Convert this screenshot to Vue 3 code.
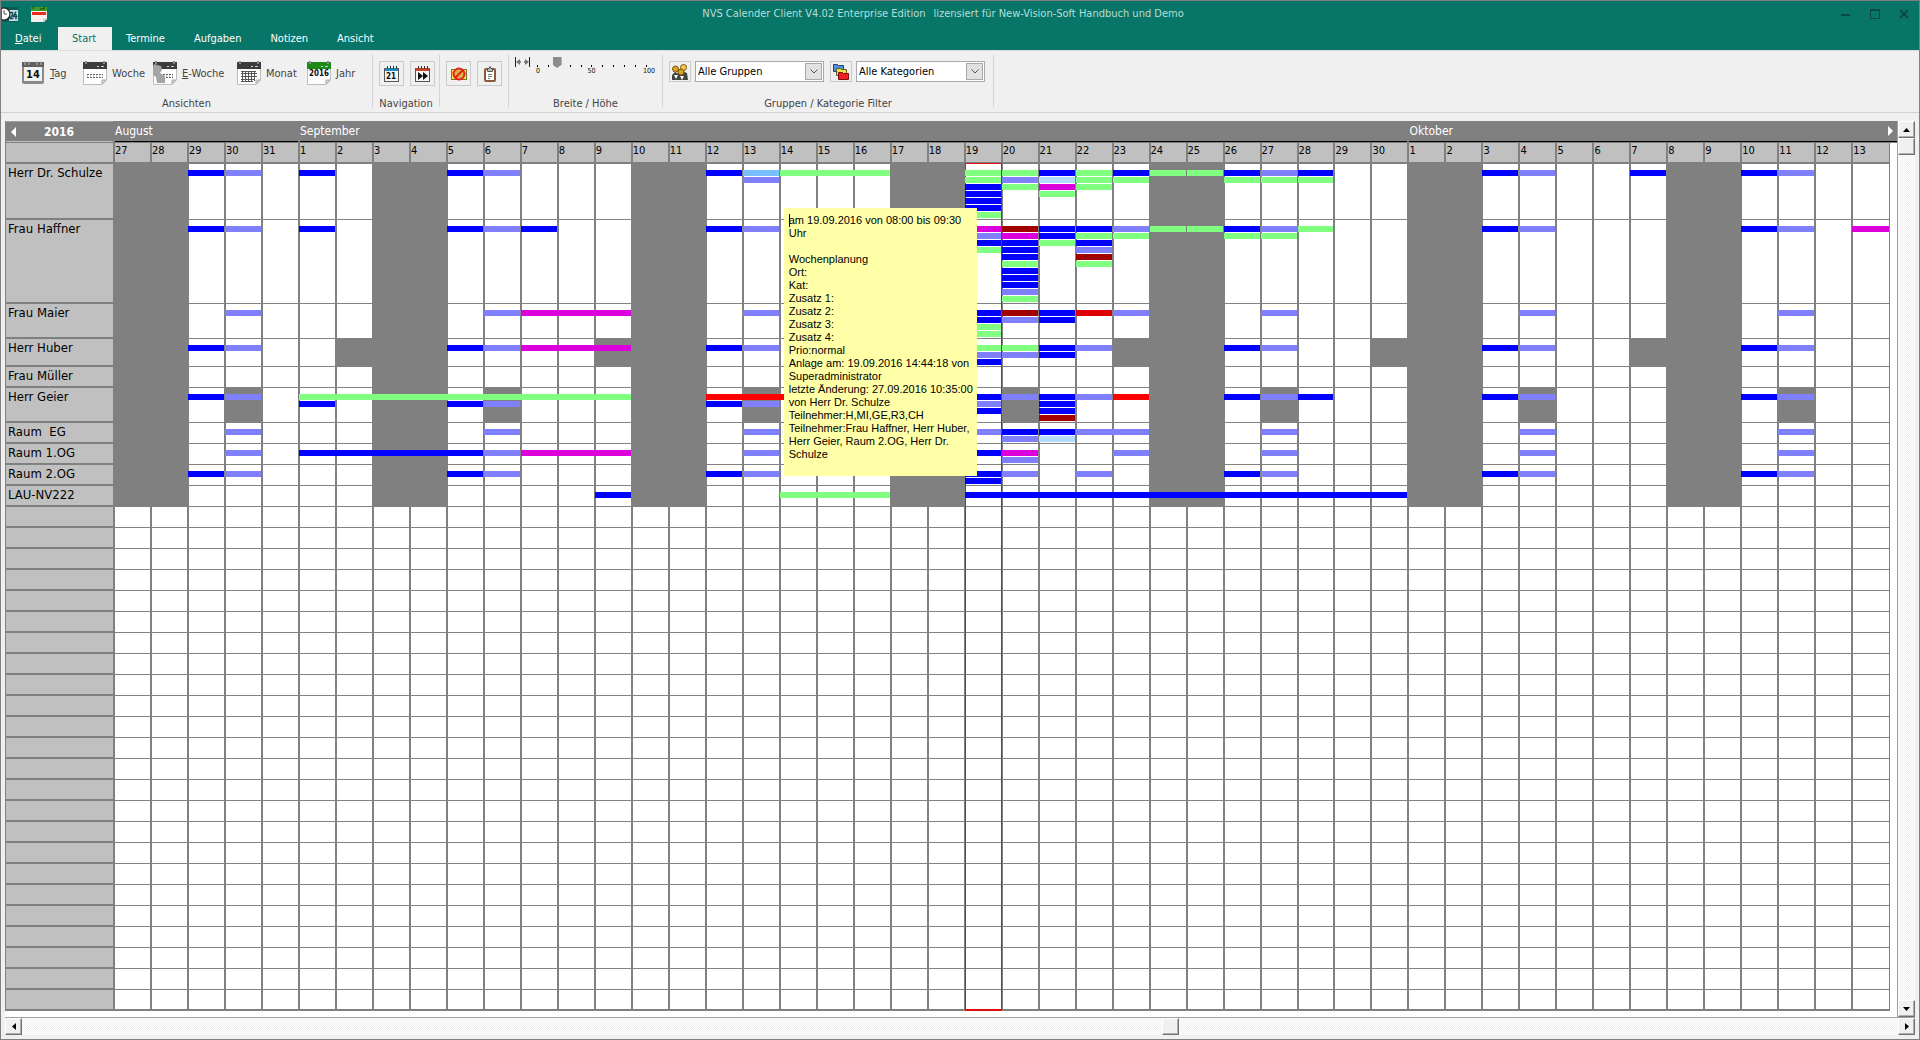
<script setup>
const tabs = ['Datei', 'Start', 'Termine', 'Aufgaben', 'Notizen', 'Ansicht']

const views = [
  { kind: 'day', key: 'T', rest: 'ag', width: 62 },
  { kind: 'week', key: '', rest: 'Woche', width: 70 },
  { kind: 'workweek', key: 'E', rest: '-Woche', width: 84 },
  { kind: 'month', key: '', rest: 'Monat', width: 70 },
  { kind: 'year', key: '', rest: 'Jahr', width: 60 },
]

const range = (prefix, from, to) =>
  Array.from({ length: to - from + 1 }, (_, i) => ({ id: prefix + (from + i), day: from + i }))

const days = [...range('a', 27, 31), ...range('s', 1, 30), ...range('o', 1, 13)]
const months = [
  { name: 'August', span: 5 },
  { name: 'September', span: 30 },
  { name: 'Oktober', span: 14 },
]
const weekend = ['a27', 'a28', 's3', 's4', 's10', 's11', 's17', 's18', 's24', 's25', 'o1', 'o2', 'o8', 'o9']
const fridays = ['s2', 's9', 's16', 's23', 's30', 'o7']
const tuesdays = ['a30', 's6', 's13', 's20', 's27', 'o4', 'o11']

// Each entry is "<colour><days>"; "-" leaves a lane free.
const people = [
  {
    name: 'Herr Dr. Schulze', lanes: 8, off: [],
    bars: {
      a29: 'b', a30: 'v', s1: 'b', s5: 'b', s6: 'v', s12: 'b', s13: 'c v', s14: 'g3',
      s19: 'g g b b b b g', s20: 'g v g', s21: 'b l m g', s22: 'g g g', s23: 'b g', s24: 'g', s25: 'g',
      s26: 'b g', s27: 'v g', s28: 'b g', o3: 'b', o4: 'v', o7: 'b', o10: 'b', o11: 'v',
    },
  },
  {
    name: 'Frau Haffner', lanes: 12, off: [],
    bars: {
      a29: 'b', a30: 'v', s1: 'b', s5: 'b', s6: 'v', s7: 'b', s12: 'b', s13: 'v', s19: 'm v b g',
      s20: 'd m b b b g b b b v g', s21: 'b b g', s22: 'b g b v d g', s23: 'v g', s24: 'g', s25: 'g',
      s26: 'b g', s27: 'v g', s28: 'g', o3: 'b', o4: 'v', o10: 'b', o11: 'v', o13: 'm',
    },
  },
  {
    name: 'Frau Maier', lanes: 5, off: [],
    bars: {
      a30: 'v', s6: 'v', s7: 'm3', s13: 'v', s19: 'b b g g', s20: 'd v', s21: 'b b', s22: 'e',
      s23: 'v', s27: 'v', o4: 'v', o11: 'v',
    },
  },
  {
    name: 'Herr Huber', lanes: 4, off: fridays,
    bars: {
      a29: 'b', a30: 'v', s5: 'b', s6: 'v', s7: 'm3', s12: 'b', s13: 'v', s19: 'g v b', s20: 'g v',
      s21: 'b b', s22: 'v', s26: 'b', s27: 'v', o3: 'b', o4: 'v', o10: 'b', o11: 'v',
    },
  },
  { name: 'Frau Müller', lanes: 3, off: [], bars: {} },
  {
    name: 'Herr Geier', lanes: 5, off: tuesdays,
    bars: {
      a29: 'b', a30: 'v', s1: 'g9 b', s5: '- b', s6: '- v', s12: 'r3 b', s13: '- v', s19: 'b v b',
      s20: 'v', s21: 'b b b d', s22: 'v', s23: 'r', s26: 'b', s27: 'v', s28: 'b', o3: 'b', o4: 'v',
      o10: 'b', o11: 'v',
    },
  },
  {
    name: 'Raum  EG', lanes: 3, off: [],
    bars: {
      a30: 'v', s6: 'v', s13: 'v', s19: 'v', s20: 'b v', s21: 'b l', s22: 'v2', s27: 'v', o4: 'v', o11: 'v',
    },
  },
  {
    name: 'Raum 1.OG', lanes: 3, off: [],
    bars: {
      a30: 'v', s1: 'b5', s6: 'v', s7: 'm3', s13: 'v', s19: 'b', s20: 'm v', s23: 'v', s27: 'v',
      o4: 'v', o11: 'v',
    },
  },
  {
    name: 'Raum 2.OG', lanes: 3, off: [],
    bars: {
      a29: 'b', a30: 'v', s5: 'b', s6: 'v', s12: 'b', s13: 'v', s19: 'b b', s20: 'v', s22: 'v',
      s26: 'b', s27: 'v', o3: 'b', o4: 'v', o10: 'b', o11: 'v',
    },
  },
  { name: 'LAU-NV222', lanes: 3, off: [], bars: { s9: 'b', s14: 'g3', s19: 'b12' } },
]

const colours = {
  b: '#0000ff', v: '#8080ff', g: '#80ff80', m: '#dc00dc', d: '#a00000', e: '#dc0000',
  r: '#ff0000', c: '#78bfff', l: '#b4dcff', '-': 'transparent',
}

const barsOf = (text) =>
  (text ? text.split(' ') : []).map((t) => ({ colour: colours[t[0]], span: Number(t.slice(1)) || 1 }))

const rows = [
  ...people.map((p) => ({
    ...p,
    cells: days.map((d) => ({
      id: d.id,
      grey: weekend.includes(d.id) || p.off.includes(d.id),
      bars: barsOf(p.bars[d.id]),
    })),
  })),
  ...Array.from({ length: 24 }, () => ({
    name: '', lanes: 3, cells: days.map((d) => ({ id: d.id, grey: false, bars: [] })),
  })),
]

const note = [
  'am 19.09.2016 von 08:00 bis 09:30', 'Uhr', '', 'Wochenplanung', 'Ort:', 'Kat:', 'Zusatz 1:', 'Zusatz 2:',
  'Zusatz 3:', 'Zusatz 4:', 'Prio:normal', 'Anlage am: 19.09.2016 14:44:18 von', 'Superadministrator',
  'letzte Änderung: 27.09.2016 10:35:00', 'von Herr Dr. Schulze', 'Teilnehmer:H,MI,GE,R3,CH',
  'Teilnehmer:Frau Haffner, Herr Huber,', 'Herr Geier, Raum 2.OG, Herr Dr.', 'Schulze',
]
</script>

<template>
  <div class="window">
    <header class="titlebar">
      <div class="caption">
        <div class="quick">
          <svg width="16" height="16" viewBox="0 0 16 16" aria-hidden="true">
            <rect width="16" height="15" y="1" fill="#0a5c58" />
            <rect x="7" y="4" width="9" height="11" fill="#cfe0e6" />
            <path d="M8 6.500h2.500v2.500L8 12.500h3.500M14 5.500L11.500 10.500h4M14 8v5.500" stroke="#14505c" stroke-width="1.500" fill="none" />
            <circle cx="2" cy="8" r="6" fill="#fff" stroke="#222" stroke-width="1.200" />
            <path d="M2 4v4h3" stroke="#555" fill="none" />
          </svg>
          <svg width="16" height="16" viewBox="0 0 16 16" aria-hidden="true">
            <path d="M0 3h16v10l-3 3H0z" fill="#f7f1ee" />
            <rect y="1" width="16" height="4" fill="#3c9a28" />
            <path d="M2 0v3M13 0v3M9 3h4" stroke="#164a10" />
            <rect x="1" y="6" width="14" height="3" fill="#ee2a20" />
            <path d="M16 12l-4 4v-3z" fill="#c9c9c9" />
          </svg>
        </div>
        <h1>NVS Calender Client V4.02 Enterprise Edition<span>lizensiert für New-Vision-Soft Handbuch und Demo</span></h1>
        <div class="winbuttons">
          <button type="button" aria-label="Minimieren"><svg width="10" height="10"><path d="M0 6h9" stroke="#0b4a43" stroke-width="2" /></svg></button>
          <button type="button" aria-label="Maximieren"><svg width="10" height="10"><path d="M.5 1v8.500h9V1" stroke="#0b4a43" fill="none" /><path d="M0 1h10" stroke="#0b4a43" stroke-width="2" /></svg></button>
          <button type="button" aria-label="Schließen"><svg width="10" height="10"><path d="M1 1l8 8M9 1l-8 8" stroke="#0b4a43" stroke-width="2" /></svg></button>
        </div>
      </div>
      <nav class="tabs">
        <a v-for="tab in tabs" :key="tab" href="#" :class="{ active: tab === 'Start' }"><template v-if="tab === 'Datei'"><u>D</u>atei</template><template v-else>{{ tab }}</template></a>
      </nav>
    </header>

    <section class="ribbon">
      <div class="group views">
        <div class="tools">
          <button v-for="v in views" :key="v.kind" type="button" class="view" :style="{ width: v.width + 'px' }">
            <svg width="24" height="24" viewBox="0 0 24 24" aria-hidden="true">
              <template v-if="v.kind === 'day'">
                <rect x="1" y="2" width="22" height="21" rx="2" fill="#8a8a8a" />
                <rect x="1" y="1" width="22" height="5" fill="#606060" />
                <path d="M4 0v4M8 0v4M16 0v4M20 0v4" stroke="#bbb" />
                <rect x="3" y="6" width="18" height="14" fill="#f2f2f2" />
                <text x="12" y="17" text-anchor="middle" class="num big">14</text>
              </template>
              <template v-else>
                <path d="M.5 4h23v15l-4.500 4.500H.5z" fill="#fdfdfd" stroke="#bdbdbd" />
                <path d="M23 19h-4v4z" fill="#ddd" stroke="#aaa" />
                <rect y="1" width="24" height="7" :fill="v.kind === 'year' ? '#1d8a16' : '#3c3c3c'" />
                <path d="M3 0v3M21 0v3" stroke="#888" stroke-width="2" />
                <path d="M14 5.500h2M18 5.500h3" stroke="#ccc" />
                <path v-if="v.kind === 'month'" d="M5.500 10v10M8.500 10v11M11.500 10v11M14.500 10v11M17.500 10v10M4 12.500h16M4 15.500h16M4 18.500h14M4 20.500h12M4 10.500h15" stroke="#555" fill="none" />
                <text v-else-if="v.kind === 'year'" x="12" y="15" text-anchor="middle" class="num">2016</text>
                <template v-else>
                  <path d="M4 13.500h16M4 16.500h16" stroke="#666" stroke-dasharray="2 1" />
                  <path d="M4 15h16" stroke="#999" stroke-dasharray="1 2" />
                </template>
                <path v-if="v.kind === 'workweek'" d="M1 3l7 2 1 4-2 3 5 3v7H4l-1-6-3-2V6z" fill="#a4a4a4" />
              </template>
            </svg>
            <span><u v-if="v.key">{{ v.key }}</u>{{ v.rest }}</span>
          </button>
        </div>
        <p>Ansichten</p>
      </div>

      <div class="group nav">
        <div class="tools">
          <button type="button" class="square" aria-label="Heute">
            <svg width="15" height="16" viewBox="0 0 15 16">
              <rect x=".5" y="2.500" width="14" height="13" fill="#f4f4f4" stroke="#555" />
              <rect x="1" y="2" width="13" height="3" fill="#1d8cc0" />
              <path d="M3.500 0v3M6.500 0v3M9.500 0v3M12.500 0v3" stroke="#333" />
              <text x="7" y="13" text-anchor="middle" class="num">21</text>
            </svg>
          </button>
          <button type="button" class="square" aria-label="Weiter">
            <svg width="15" height="16" viewBox="0 0 15 16">
              <rect x=".5" y="2.500" width="14" height="13" fill="#f4f4f4" stroke="#555" />
              <rect x="1" y="2" width="13" height="3" fill="#c8452c" />
              <path d="M3.500 0v3M6.500 0v3M9.500 0v3M12.500 0v3" stroke="#333" />
              <path d="M3 6l5 4-5 4zM8 6l5 4-5 4z" fill="#111" />
            </svg>
          </button>
        </div>
        <p>Navigation</p>
      </div>

      <div class="group edit">
        <div class="tools">
          <button type="button" class="square" aria-label="Sperren">
            <svg width="16" height="14" viewBox="0 0 16 14">
              <rect x=".5" y="2.500" width="15" height="10" fill="#fff23c" stroke="#777430" />
              <circle cx="8" cy="7" r="5.500" fill="#d8b440" stroke="#e8201c" stroke-width="2" />
              <path d="M4 11l8-8" stroke="#e8201c" stroke-width="2" />
            </svg>
          </button>
          <button type="button" class="square" aria-label="Einfügen">
            <svg width="12" height="16" viewBox="0 0 12 16">
              <rect x="1" y="3" width="10" height="12" rx="1" fill="#fff" stroke="#8a5a3c" stroke-width="2" />
              <path d="M3.500 2.500h1.500l1-2 1 2h1.500v3h-5z" fill="#bbb" stroke="#555" />
              <path d="M4 8.500h4M4 10.500h4M4 12.500h2" stroke="#777" />
            </svg>
          </button>
        </div>
      </div>

      <div class="group size">
        <div class="tools">
          <svg width="15" height="10" viewBox="0 0 15 10" aria-hidden="true">
            <path d="M.5 0v10M14.500 0v10M2 5h4M9 5h4" stroke="#222" />
            <path d="M1 5l4-3v6zM14 5l-4-3v6z" fill="#777" />
          </svg>
          <div class="slider">
            <input type="range" min="0" max="100" value="18" aria-label="Breite / Höhe" />
            <div class="ticks"><i v-for="n in 11" :key="n"></i></div>
            <div class="scale"><span>0</span><span>50</span><span>100</span></div>
          </div>
        </div>
        <p>Breite / Höhe</p>
      </div>

      <div class="group filter">
        <div class="tools">
          <button type="button" class="tiny" aria-label="Gruppen">
            <svg width="16" height="16" viewBox="0 0 16 16">
              <path d="M0 16v-5l3-3 4 2 3-3 5 2 1 7z" fill="#444" />
              <path d="M2 11l2 4 2-4zM8 12l2 4 2-4z" fill="#fff" />
              <circle cx="11.500" cy="3.500" r="3" fill="#f0cc50" stroke="#7a5208" />
              <circle cx="3.500" cy="5" r="3" fill="#d9a420" stroke="#7a5208" />
              <circle cx="9" cy="8" r="3" fill="#d9a420" stroke="#7a5208" />
            </svg>
          </button>
          <span class="combo">
            <select aria-label="Gruppen Filter"><option>Alle Gruppen</option></select>
            <span class="arrow"><svg width="8" height="5" viewBox="0 0 8 5"><path d="M.5 .5L4 4 7.500 .5" fill="none" stroke="#555" /></svg></span>
          </span>
          <button type="button" class="tiny second" aria-label="Kategorien">
            <svg width="16" height="16" viewBox="0 0 16 16">
              <path d="M.5 7.500v-7h4l1 1h5v6z" fill="#4f8fe0" stroke="#28415f" />
              <path d="M3.500 11.500v-7h4l1 1h5v6z" fill="#f2e04c" stroke="#5f5a28" />
              <path d="M5.500 15.500v-7h4l1 1h5v6z" fill="#f02020" stroke="#7a1010" />
            </svg>
          </button>
          <span class="combo">
            <select aria-label="Kategorie Filter"><option>Alle Kategorien</option></select>
            <span class="arrow"><svg width="8" height="5" viewBox="0 0 8 5"><path d="M.5 .5L4 4 7.500 .5" fill="none" stroke="#555" /></svg></span>
          </span>
        </div>
        <p>Gruppen / Kategorie Filter</p>
      </div>
    </section>

    <main class="planner">
      <div class="upper">
        <div class="sheet">
          <table>
            <colgroup>
              <col class="names" />
              <col v-for="d in days" :key="d.id" />
              <col class="edge" />
            </colgroup>
            <thead>
              <tr class="months">
                <th class="year">
                  <div>
                    <button type="button" aria-label="Zurück"><svg width="5" height="10"><path d="M5 0v10L0 5z" fill="#fff" /></svg></button>
                    <b>2016</b>
                  </div>
                </th>
                <th v-for="(m, i) in months" :key="m.name" :colspan="m.span">
                  <div>
                    <span>{{ m.name }}</span>
                    <button v-if="i === 2" type="button" aria-label="Vor"><svg width="5" height="10"><path d="M0 0v10l5-5z" fill="#fff" /></svg></button>
                  </div>
                </th>
              </tr>
              <tr class="days">
                <th class="name"></th>
                <th v-for="d in days" :key="d.id">{{ d.day }}</th>
                <td class="edge"></td>
              </tr>
            </thead>
            <tbody>
              <tr v-for="(row, r) in rows" :key="r" :style="{ height: row.lanes * 7 + 'px' }">
                <th class="name">{{ row.name }}</th>
                <td v-for="cell in row.cells" :key="cell.id" :class="{ grey: cell.grey, today: cell.id === 's19' }">
                  <div v-if="cell.bars.length" class="bars">
                    <div
                      v-for="(bar, i) in cell.bars"
                      :key="i"
                      class="bar"
                      :style="{ background: bar.colour, width: `calc(${bar.span} * (100% + 1px) - 1px)` }"
                    ></div>
                  </div>
                  <div v-if="r === 0 && cell.id === 's14'" class="note" role="tooltip">
                    <div v-for="(line, i) in note" :key="i"><i v-if="i === 0" class="caret"></i>{{ line }}</div>
                  </div>
                </td>
                <td class="edge"></td>
              </tr>
            </tbody>
          </table>
        </div>
        <div class="scroll vertical">
          <button type="button" aria-label="Nach oben"><svg width="7" height="4"><path d="M0 4h7L3.500 0z" /></svg></button>
          <div class="thumb"></div>
          <div class="track"></div>
          <button type="button" aria-label="Nach unten"><svg width="7" height="4"><path d="M0 0h7L3.500 4z" /></svg></button>
        </div>
      </div>
      <div class="scroll horizontal">
        <button type="button" aria-label="Nach links"><svg width="4" height="7"><path d="M4 0v7L0 3.500z" /></svg></button>
        <div class="track before"></div>
        <div class="thumb"></div>
        <div class="track after"></div>
        <button type="button" aria-label="Nach rechts"><svg width="4" height="7"><path d="M0 0v7l4-3.500z" /></svg></button>
      </div>
    </main>
  </div>
</template>

<style>
body {
  margin: 0;
  background: #f0f0f0;
}
</style>

<style scoped>
* {
  box-sizing: border-box;
}

.window {
  min-height: 100vh;
  border: 1px solid #808080;
  background: #f0f0f0;
  color: #444;
  font: 11px/14px "DejaVu Sans Condensed", "Noto Sans", sans-serif;
}

button {
  margin: 0;
  padding: 0;
  border: 0;
  background: none;
  color: inherit;
  font: inherit;
}

svg {
  display: block;
  flex: none;
}

h1,
p {
  margin: 0;
  font: inherit;
}

/* Title bar */
.titlebar {
  background: #077568;
  color: #fff;
}

.caption {
  display: flex;
  align-items: center;
  height: 26px;
}

.quick {
  display: flex;
  gap: 13px;
  width: 66px;
  padding-left: 1px;
}

h1 {
  flex: 1;
  color: #b8ded6;
  text-align: center;
}

h1 span {
  margin-left: 8px;
}

.winbuttons {
  display: flex;
  gap: 19px;
  width: 100px;
  padding: 0 10px 0 22px;
}

.tabs {
  display: flex;
  height: 23px;
}

.tabs a {
  padding: 5px 14px 0;
  color: #fff;
  text-decoration: none;
}

.tabs a:first-child {
  width: 57px;
}

.tabs a.active {
  width: 54px;
  background: #f0f0f0;
  color: #077568;
}

.tabs a:nth-child(n + 3) {
  margin-right: 1px;
}

/* Ribbon */
.ribbon {
  display: flex;
  height: 63px;
  border-top: 1px solid #dcdcdc;
  border-bottom: 1px solid #d0d0d0;
}

.group {
  display: flex;
  flex-direction: column;
  justify-content: space-between;
  margin: 4px 0 5px;
  border-right: 1px solid #d4d4d4;
}

.group p {
  margin-bottom: -4px;
  text-align: center;
}

.tools {
  display: flex;
  padding-top: 6px;
}

.group.views { width: 372px; }
.views .tools { padding-left: 20px; }
.view { display: flex; align-items: center; gap: 5px; white-space: nowrap; }
.view span { padding-top: 2px; }
.group.nav { width: 67px; }
.group.edit { width: 69px; }
.nav .tools, .edit .tools { gap: 6px; padding-left: 6px; }
.group.size { width: 154px; }
.size .tools { gap: 3px; padding: 2px 0 0 6px; }
.group.filter { width: 331px; }
.filter .tools { padding-left: 6px; gap: 4px; }

.num {
  fill: #111;
  font: bold 8px "DejaVu Sans Condensed", sans-serif;
}

.num.big {
  font-size: 11px;
}

.square,
.tiny {
  display: flex;
  align-items: center;
  justify-content: center;
  width: 25px;
  height: 25px;
  border: 1px solid #cacaca;
}

.tiny {
  width: 22px;
  height: 21px;
}

.tiny.second {
  margin-left: 2px;
}

.slider {
  width: 124px;
}

input[type="range"] {
  display: block;
  appearance: none;
  width: 118px;
  height: 11px;
  margin: 0;
  background: none;
}

input[type="range"]::-webkit-slider-thumb {
  appearance: none;
  width: 9px;
  height: 11px;
  background: #8c8c8c;
  clip-path: polygon(0 0, 100% 0, 100% 70%, 50% 100%, 0 70%);
}

.ticks {
  display: flex;
  justify-content: space-between;
  width: 110px;
  margin: -3px 0 0 4px;
}

.ticks i {
  width: 1px;
  height: 2px;
  background: #000;
}

.ticks i:nth-child(3) {
  background: none;
}

.scale {
  display: flex;
  justify-content: space-between;
  width: 122px;
  padding-left: 3px;
  color: #111;
  font-size: 7px;
  line-height: 9px;
}

.combo {
  position: relative;
  width: 129px;
  height: 21px;
}

select {
  appearance: none;
  width: 100%;
  height: 100%;
  padding: 0 18px 0 2px;
  border: 1px solid #a8a8b0;
  border-radius: 0;
  background: #fff;
  color: #000;
  font: inherit;
}

.arrow {
  position: absolute;
  top: 2px;
  right: 2px;
  bottom: 2px;
  display: flex;
  align-items: center;
  justify-content: center;
  width: 17px;
  border: 1px solid #a8a8a8;
  background: #e1e1e1;
  pointer-events: none;
}

/* Planner */
.planner {
  padding: 8px 4px 4px;
}

.upper {
  display: flex;
}

.sheet {
  flex: 1;
  padding-bottom: 6px;
  background: #fff;
}

table {
  width: 100%;
  table-layout: fixed;
  border-spacing: 0;
  border-left: 1px solid #808080;
  color: #000;
}

th,
td {
  padding: 0;
  border-left: 2px solid #808080;
  font-weight: normal;
  text-align: left;
  vertical-align: top;
}

col.names { width: 107px; }
col.edge { width: 8px; }

.months th {
  height: 22px;
  background: #808080;
  color: #fff;
  font-size: 12px;
}

.months th div {
  display: flex;
  align-items: center;
  justify-content: space-between;
  height: 21px;
  padding-right: 4px;
  border-bottom: 1px solid #000;
}

.months th.year {
  border-left: 0;
}

.months .year div {
  justify-content: flex-start;
  gap: 28px;
  padding-left: 5px;
  border-top: 1px solid #a0a0a0;
  border-bottom-color: #c0c0c0;
}

.days th {
  height: 21px;
  padding-top: 1px;
  border-bottom: 2px solid #808080;
  background: #c0c0c0;
}

th.name {
  padding-left: 2px;
  border-left: 0;
  border-bottom: 2px solid #808080;
  background: #c0c0c0;
  font-size: 13px;
  line-height: 17px;
  white-space: pre;
}

tbody td {
  position: relative;
  border-bottom: 1px solid #808080;
  background: #fff;
}

tbody tr:last-child td {
  border-bottom-width: 2px;
}

tbody td.grey {
  background: #808080;
}

td.edge,
tbody tr:not(:last-child) td.edge {
  border-left-width: 1px;
  border-bottom: 0;
}

td.today::before {
  content: "";
  position: absolute;
  z-index: 1;
  top: 0;
  right: -1px;
  bottom: -1px;
  left: -1px;
  border: solid #e01010;
  border-width: 0 1px;
}

tr:first-child td.today::before {
  top: -1px;
  border-top-width: 1px;
}

tr:last-child td.today::before {
  bottom: -2px;
  border-bottom-width: 2px;
}

.bars {
  display: flex;
  flex-direction: column;
  gap: 1px;
  margin: 6px 0 0 -1px;
}

.bar {
  position: relative;
  z-index: 2;
  height: 6px;
}

.note {
  position: absolute;
  top: 44px;
  left: 3px;
  z-index: 3;
  width: 193px;
  height: 268px;
  padding: 6px 5px;
  background: #ffffa8;
  color: #000;
  font: 11px/13px "Liberation Sans", sans-serif;
  white-space: nowrap;
}

.note div {
  height: 13px;
}

.caret {
  display: inline-block;
  width: 1px;
  height: 13px;
  margin-right: -1px;
  background: #000;
  vertical-align: top;
}

/* Scroll bars */
.scroll {
  display: flex;
}

.scroll button,
.thumb {
  display: flex;
  flex: none;
  align-items: center;
  justify-content: center;
  width: 17px;
  height: 17px;
  border: 1px solid #fff;
  border-right: 1px solid #707070;
  border-bottom: 1px solid #707070;
  background: #f0f0f0;
  box-shadow: inset -1px -1px #b0b0b0;
}

.track {
  background: repeating-conic-gradient(#fff 0 25%, #f0f0f0 0 50%) 0 0 / 2px 2px;
}

.vertical {
  flex-direction: column;
  width: 18px;
  border-left: 1px solid #a0a0a0;
}

.vertical .track {
  flex: 1;
}

.horizontal {
  border-top: 1px solid #a0a0a0;
}

.before { flex: 1140; }
.after { flex: 719; }
</style>
